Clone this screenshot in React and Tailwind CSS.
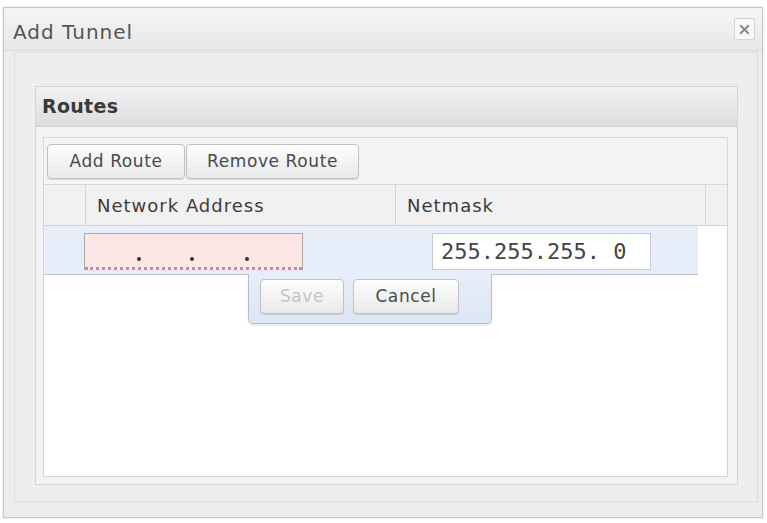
import { X } from "lucide-react";

const ui = { fontFamily: '"DejaVu Sans", "Liberation Sans", sans-serif' };
const mono = { fontFamily: '"DejaVu Sans Mono", "Liberation Mono", monospace' };

function Btn({ children, className = "", disabled }) {
    return (
        <div
            className={`flex items-center justify-center h-[35px] rounded-[4px] border border-[#c2c2c2] bg-gradient-to-b from-[#fdfdfd] to-[#e9e9e9] shadow-[0_1px_1px_rgba(0,0,0,0.12)] text-[17px] tracking-[0.6px] ${disabled ? "text-[#c4c4c4]" : "text-[#4a4a4a]"} ${className}`}
        >
            {children}
        </div>
    );
}

export default function App() {
    return (
        <div className="w-[767px] h-[523px] bg-white pt-[7px] pl-[3px] pr-[4px]" style={ui}>
            <div className="h-[511px] flex flex-col border border-[#c6c6c6] bg-[#ececec] shadow-[0_0_2px_rgba(0,0,0,0.15)]">
                {/* title bar */}
                <div className="h-[43px] flex items-center justify-between pl-[9px] pr-[7px] bg-gradient-to-b from-[#f5f5f5] to-[#e7e7e7] border-b border-[#d9d9d9]">
                    <span className="pt-[5px] text-[20px] text-[#555] tracking-[1px]">Add Tunnel</span>
                    <div className="w-[21px] h-[22px] flex items-center justify-center border border-[#d4d4d4] bg-[#f7f7f7] rounded-[2px]">
                        <X size={15} strokeWidth={3} color="#8a8a8a" />
                    </div>
                </div>

                {/* body */}
                <div className="flex-1 flex flex-col pl-[10px] pr-[4px] pt-[1px] pb-[15px]">
                    <div className="flex-1 flex flex-col border border-[#dcdcdc] bg-[#eeeeee] pl-[20px] pr-[19px] pt-[33px] pb-[16px]">
                        {/* routes panel */}
                        <div className="flex-1 flex flex-col border border-[#d6d6d6] bg-[#f3f3f3]">
                            <div className="h-[40px] flex items-center pl-[6px] bg-gradient-to-b from-[#f2f2f2] to-[#dddddd] border-b border-[#d2d2d2]">
                                <span className="text-[19px] font-bold text-[#3a3a3a] tracking-[0.3px]">Routes</span>
                            </div>
                            <div className="flex-1 flex flex-col pl-[7px] pr-[9px] pt-[10px] pb-[7px]">
                                {/* toolbar */}
                                <div className="h-[48px] flex items-start gap-[1px] pt-[6px] pl-[3px] border border-[#d8d8d8] bg-[#f4f4f4]">
                                    <Btn className="w-[138px]">Add Route</Btn>
                                    <Btn className="w-[173px]">Remove Route</Btn>
                                </div>

                                {/* grid */}
                                <div className="flex-1 flex flex-col border-x border-b border-[#d4d4d4] bg-white">
                                    <div className="h-[41px] flex bg-[#f1f1f1] border-b border-[#d2d2d2] text-[18px] tracking-[1px] text-[#3c3c3c]">
                                        <div className="w-[42px] border-r border-[#d6d6d6]" />
                                        <div className="w-[310px] flex items-center pl-[11px] border-r border-[#d6d6d6]">Network Address</div>
                                        <div className="w-[310px] flex items-center pl-[11px] border-r border-[#d6d6d6]">Netmask</div>
                                        <div className="flex-1" />
                                    </div>

                                    {/* row editor */}
                                    <div className="relative w-[654px] h-[49px] flex items-start pt-[7px] bg-[#e7eefa] border-b border-[#b9c3d1]">
                                        <div className="ml-[40px] w-[219px] h-[37px] flex flex-col border border-b-0 border-[#a9a9a9] bg-[#fde6e6]">
                                            <div className="flex-1 flex items-end pb-[6px]">
                                                <span className="ml-[52px] w-[4px] h-[4px] rounded-full bg-[#333]" />
                                                <span className="ml-[49px] w-[4px] h-[4px] rounded-full bg-[#333]" />
                                                <span className="ml-[51px] w-[4px] h-[4px] rounded-full bg-[#333]" />
                                            </div>
                                            <div className="h-0 border-b-[3px] border-dotted border-[#c98aa4]" />
                                        </div>
                                        <div className="ml-[129px] w-[219px] h-[37px] flex items-center pl-[8px] border border-[#c9c9c9] bg-white text-[22px] text-[#444] leading-none" style={mono}>
                                            255.255.255. 0
                                        </div>

                                        {/* save / cancel popup */}
                                        <div className="absolute top-[48px] left-[204px] w-[244px] h-[50px] flex items-start gap-[9px] pt-[5px] pl-[11px] bg-gradient-to-b from-[#e7eefa] to-[#dde6f3] border-x border-b border-[#b3bfce] rounded-b-[5px] shadow-[0_2px_2px_rgba(0,0,0,0.08)]">
                                            <Btn className="w-[84px]" disabled>Save</Btn>
                                            <Btn className="w-[106px]">Cancel</Btn>
                                        </div>
                                    </div>
                                </div>
                            </div>
                        </div>
                    </div>
                </div>
            </div>
        </div>
    );
}
